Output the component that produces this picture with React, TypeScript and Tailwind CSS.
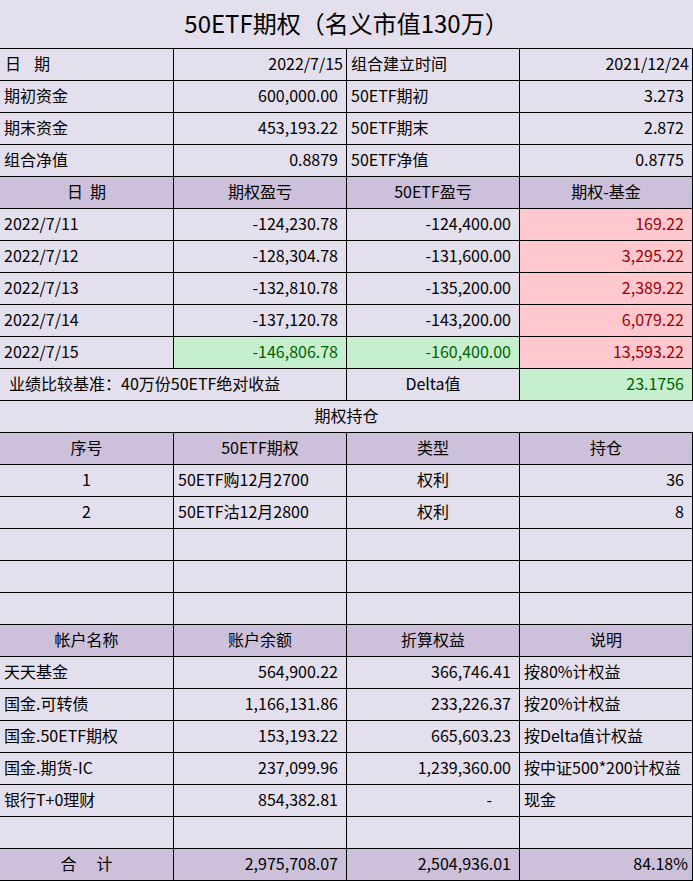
import React from 'react';

type Cell = {
  t?: string;
  a?: 'l' | 'c' | 'r' | 'n';
  tone?: 'bad' | 'good';
  span?: number;
};

const widths = [174, 173, 173, 173];

const Row: React.FC<{ cells: Cell[]; head?: boolean }> = ({ cells, head }) => {
  let col = 0;
  return (
    <div className={`flex h-[32px] border-b border-black ${head ? 'bg-[#ccc0da]' : ''}`}>
      {cells.map((c, i) => {
        const span = c.span ?? 1;
        const w = widths.slice(col, col + span).reduce((s, x) => s + x, 0);
        col += span;
        const align =
          c.a === 'c'
            ? 'justify-center'
            : c.a === 'r'
            ? 'justify-end pr-[3px]'
            : c.a === 'n'
            ? 'justify-end pr-[8px]'
            : 'justify-start pl-[4px]';
        const tone =
          c.tone === 'bad'
            ? 'bg-[#ffc7ce] text-[#9c0006]'
            : c.tone === 'good'
            ? 'bg-[#c6efce] text-[#006100]'
            : '';
        return (
          <div
            key={i}
            className={`flex h-full items-center pb-[3px] border-r border-black whitespace-nowrap ${align} ${tone}`}
            style={{ width: w }}
          >
            {c.t}
          </div>
        );
      })}
    </div>
  );
};

const Spaced: React.FC<{ a: string; b: string; gap: number }> = ({ a, b, gap }) => (
  <span>
    {a}
    <span className="inline-block" style={{ width: gap }} />
    {b}
  </span>
);

const pnl: [string, string, string, string][] = [
  ['2022/7/11', '-124,230.78', '-124,400.00', '169.22'],
  ['2022/7/12', '-128,304.78', '-131,600.00', '3,295.22'],
  ['2022/7/13', '-132,810.78', '-135,200.00', '2,389.22'],
  ['2022/7/14', '-137,120.78', '-143,200.00', '6,079.22'],
];

const accounts: [string, string, string, string][] = [
  ['天天基金', '564,900.22', '366,746.41', '按80%计权益'],
  ['国金.可转债', '1,166,131.86', '233,226.37', '按20%计权益'],
  ['国金.50ETF期权', '153,193.22', '665,603.23', '按Delta值计权益'],
  ['国金.期货-IC', '237,099.96', '1,239,360.00', '按中证500*200计权益'],
];

export default function App() {
  return (
    <div
      className="w-[693px] h-[881px] bg-[#e4dfec] text-black text-[16px] leading-none overflow-hidden"
      style={{ fontFamily: '"Noto Sans CJK SC", "Noto Sans", sans-serif' }}
    >
      <div className="h-[49px] pb-[3px] border-b border-black flex items-center justify-center text-[24px]">
        50ETF期权（名义市值130万）
      </div>

      <div className="flex h-[32px] border-b border-black">
        <div className="w-[174px] pb-[3px] border-r border-black flex items-center pl-[5px]">
          <Spaced a="日" b="期" gap={13} />
        </div>
        <div className="w-[173px] pb-[3px] border-r border-black flex items-center justify-end pr-[3px]">2022/7/15</div>
        <div className="w-[173px] pb-[3px] border-r border-black flex items-center pl-[4px]">组合建立时间</div>
        <div className="w-[173px] pb-[3px] border-r border-black flex items-center justify-end pr-[3px]">2021/12/24</div>
      </div>
      <Row cells={[{ t: '期初资金' }, { t: '600,000.00', a: 'n' }, { t: '50ETF期初' }, { t: '3.273', a: 'n' }]} />
      <Row cells={[{ t: '期末资金' }, { t: '453,193.22', a: 'n' }, { t: '50ETF期末' }, { t: '2.872', a: 'n' }]} />
      <Row cells={[{ t: '组合净值' }, { t: '0.8879', a: 'n' }, { t: '50ETF净值' }, { t: '0.8775', a: 'n' }]} />

      <div className="flex h-[32px] border-b border-black bg-[#ccc0da]">
        <div className="w-[174px] pb-[3px] border-r border-black flex items-center justify-center">
          <Spaced a="日" b="期" gap={7} />
        </div>
        <div className="w-[173px] pb-[3px] border-r border-black flex items-center justify-center">期权盈亏</div>
        <div className="w-[173px] pb-[3px] border-r border-black flex items-center justify-center">50ETF盈亏</div>
        <div className="w-[173px] pb-[3px] border-r border-black flex items-center justify-center">期权-基金</div>
      </div>
      {pnl.map((r) => (
        <Row
          key={r[0]}
          cells={[{ t: r[0] }, { t: r[1], a: 'n' }, { t: r[2], a: 'n' }, { t: r[3], a: 'n', tone: 'bad' }]}
        />
      ))}
      <Row
        cells={[
          { t: '2022/7/15' },
          { t: '-146,806.78', a: 'n', tone: 'good' },
          { t: '-160,400.00', a: 'n', tone: 'good' },
          { t: '13,593.22', a: 'n', tone: 'bad' },
        ]}
      />
      <div className="flex h-[32px] border-b border-black">
        <div className="w-[347px] pb-[3px] border-r border-black flex items-center pl-[9px]">业绩比较基准：40万份50ETF绝对收益</div>
        <div className="w-[173px] pb-[3px] border-r border-black flex items-center justify-center">Delta值</div>
        <div className="w-[173px] pb-[3px] border-r border-black flex items-center justify-end pr-[8px] bg-[#c6efce] text-[#006100]">
          23.1756
        </div>
      </div>

      <div className="h-[32px] pb-[3px] border-b border-black flex items-center justify-center">期权持仓</div>
      <Row head cells={[{ t: '序号', a: 'c' }, { t: '50ETF期权', a: 'c' }, { t: '类型', a: 'c' }, { t: '持仓', a: 'c' }]} />
      <Row cells={[{ t: '1', a: 'c' }, { t: '50ETF购12月2700' }, { t: '权利', a: 'c' }, { t: '36', a: 'n' }]} />
      <Row cells={[{ t: '2', a: 'c' }, { t: '50ETF沽12月2800' }, { t: '权利', a: 'c' }, { t: '8', a: 'n' }]} />
      <Row cells={[{}, {}, {}, {}]} />
      <Row cells={[{}, {}, {}, {}]} />
      <Row cells={[{}, {}, {}, {}]} />

      <Row head cells={[{ t: '帐户名称', a: 'c' }, { t: '账户余额', a: 'c' }, { t: '折算权益', a: 'c' }, { t: '说明', a: 'c' }]} />
      {accounts.map((r) => (
        <Row key={r[0]} cells={[{ t: r[0] }, { t: r[1], a: 'n' }, { t: r[2], a: 'n' }, { t: r[3] }]} />
      ))}
      <div className="flex h-[32px] border-b border-black">
        <div className="w-[174px] pb-[3px] border-r border-black flex items-center pl-[4px]">银行T+0理财</div>
        <div className="w-[173px] pb-[3px] border-r border-black flex items-center justify-end pr-[8px]">854,382.81</div>
        <div className="w-[173px] pb-[3px] border-r border-black flex items-center justify-end pr-[27px]">-</div>
        <div className="w-[173px] pb-[3px] border-r border-black flex items-center pl-[4px]">现金</div>
      </div>
      <Row cells={[{}, {}, {}, {}]} />
      <div className="flex h-[32px] border-b border-black bg-[#ccc0da]">
        <div className="w-[174px] pb-[3px] border-r border-black flex items-center justify-center">
          <Spaced a="合" b="计" gap={20} />
        </div>
        <div className="w-[173px] pb-[3px] border-r border-black flex items-center justify-end pr-[8px]">2,975,708.07</div>
        <div className="w-[173px] pb-[3px] border-r border-black flex items-center justify-end pr-[8px]">2,504,936.01</div>
        <div className="w-[173px] pb-[3px] border-r border-black flex items-center justify-end pr-[4px]">84.18%</div>
      </div>
    </div>
  );
}
